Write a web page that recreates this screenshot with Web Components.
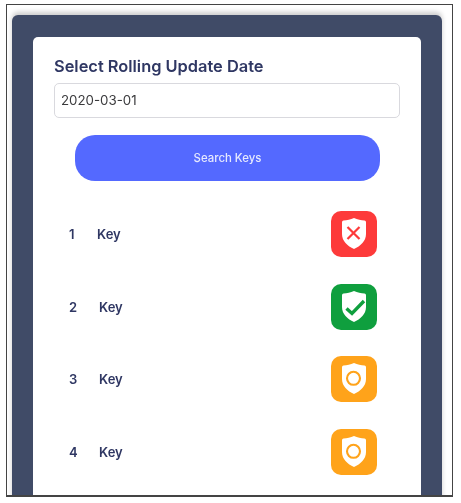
<!DOCTYPE html>
<html>
<head>
<meta charset="utf-8">
<style>
html, body { margin: 0; padding: 0; background: #fff; }
body { width: 461px; height: 503px; overflow: hidden; font-family: Inter, "Liberation Sans", sans-serif; }
</style>
</head>
<body>
<key-screen>
    <date-form></date-form>
    <key-row num="1" state="bad"></key-row>
    <key-row num="2" state="good" wide></key-row>
    <key-row num="3" state="warn" wide></key-row>
    <key-row num="4" state="warn" wide></key-row>
</key-screen>

<script>
const keyScreenTemplate = document.createElement('template');
keyScreenTemplate.innerHTML = `
<style>
:host {
    display: block;
    box-sizing: border-box;
    width: 447px;
    height: 493px;
    margin: 4px 0 0 6px;
    border: 1px solid #444;
    border-bottom-width: 2px;
    overflow: hidden;
    background: #fff;
}
.panel {
    box-sizing: border-box;
    height: 100%;
    margin: 10px 10px 0 5px;
    padding: 22px 21px 0 21px;
    background: #404b67;
    border-radius: 6px 6px 0 0;
    box-shadow: 0 -3px 5px rgba(0, 0, 0, 0.2);
}
.card {
    box-sizing: border-box;
    height: 100%;
    padding: 20px 21px 0 21px;
    background: #fff;
    border-radius: 5px 5px 0 0;
    filter: blur(0.35px);
}
</style>
<div class="panel">
    <div class="card"><slot></slot></div>
</div>
`;

class KeyScreen extends HTMLElement {
    connectedCallback() {
        const shadowRoot = this.attachShadow({ mode: 'open' });
        shadowRoot.appendChild(keyScreenTemplate.content.cloneNode(true));
    }
}

const dateFormTemplate = document.createElement('template');
dateFormTemplate.innerHTML = `
<style>
:host {
    display: block;
    margin-bottom: 30px;
}
.title {
    height: 18px;
    line-height: 18px;
    margin-bottom: 8px;
    font-size: 16.4px;
    font-weight: 600;
    color: #2f3763;
    white-space: nowrap;
}
.field {
    box-sizing: border-box;
    height: 35px;
    line-height: 33px;
    padding-left: 6px;
    border: 1px solid #d9d9de;
    border-radius: 5px;
    font-size: 13.3px;
    color: #3a3a3c;
}
.button {
    height: 46px;
    line-height: 46px;
    margin: 17px 20px 0 21px;
    border-radius: 20px;
    background: #5469ff;
    text-align: center;
    font-size: 11.4px;
    font-weight: 500;
    color: #e6e9ff;
}
</style>
<div class="title">Select Rolling Update Date</div>
<div class="field">2020-03-01</div>
<div class="button">Search Keys</div>
`;

class DateForm extends HTMLElement {
    connectedCallback() {
        const shadowRoot = this.attachShadow({ mode: 'open' });
        shadowRoot.appendChild(dateFormTemplate.content.cloneNode(true));
    }
}

const shieldPath = 'M23 7 C26.5 8.4 30 9.2 33.5 9.6 Q35 9.8 35 11.2 L35 23 C35 30 29.5 35 23 38 C16.5 35 11 30 11 23 L11 11.2 Q11 9.8 12.5 9.6 C16 9.2 19.5 8.4 23 7 Z';

const keyMarks = {
    bad: { color: '#fd3a3a', mark: '<path d="M16.5 16 L28.5 28 M28.5 16 L16.5 28" fill="none" stroke="#fd3a3a" stroke-width="2.2"/>' },
    good: { color: '#0f9f3e', mark: '<path d="M15.5 24.5 L21 29.5 L33 17" fill="none" stroke="#0f9f3e" stroke-width="3.4"/>' },
    warn: { color: '#ffa31a', mark: '<circle cx="22.5" cy="22.3" r="6.5" fill="none" stroke="#ffa31a" stroke-width="2.1"/>' }
};

const keyRowTemplate = document.createElement('template');
keyRowTemplate.innerHTML = `
<style>
:host {
    display: flex;
    align-items: center;
    height: 46px;
    margin-bottom: 26.7px;
    padding: 0 23px 0 15px;
    font-size: 13px;
    font-weight: 600;
    color: #2f3763;
}
.num { width: 28px; }
:host([wide]) .num { width: 30px; }
.name { flex: 1; }
svg { display: block; width: 46px; height: 46px; }
</style>
<span class="num"></span>
<span class="name">Key</span>
<svg viewBox="0 0 46 46"></svg>
`;

class KeyRow extends HTMLElement {
    connectedCallback() {
        const shadowRoot = this.attachShadow({ mode: 'open' });
        shadowRoot.appendChild(keyRowTemplate.content.cloneNode(true));
        shadowRoot.querySelector('.num').textContent = this.getAttribute('num');
        const look = keyMarks[this.getAttribute('state')];
        shadowRoot.querySelector('svg').innerHTML =
            '<rect width="46" height="46" rx="10" fill="' + look.color + '"/>' +
            '<path d="' + shieldPath + '" fill="#fff"/>' + look.mark;
    }
}

customElements.define('key-screen', KeyScreen);
customElements.define('date-form', DateForm);
customElements.define('key-row', KeyRow);
</script>
</body>
</html>
